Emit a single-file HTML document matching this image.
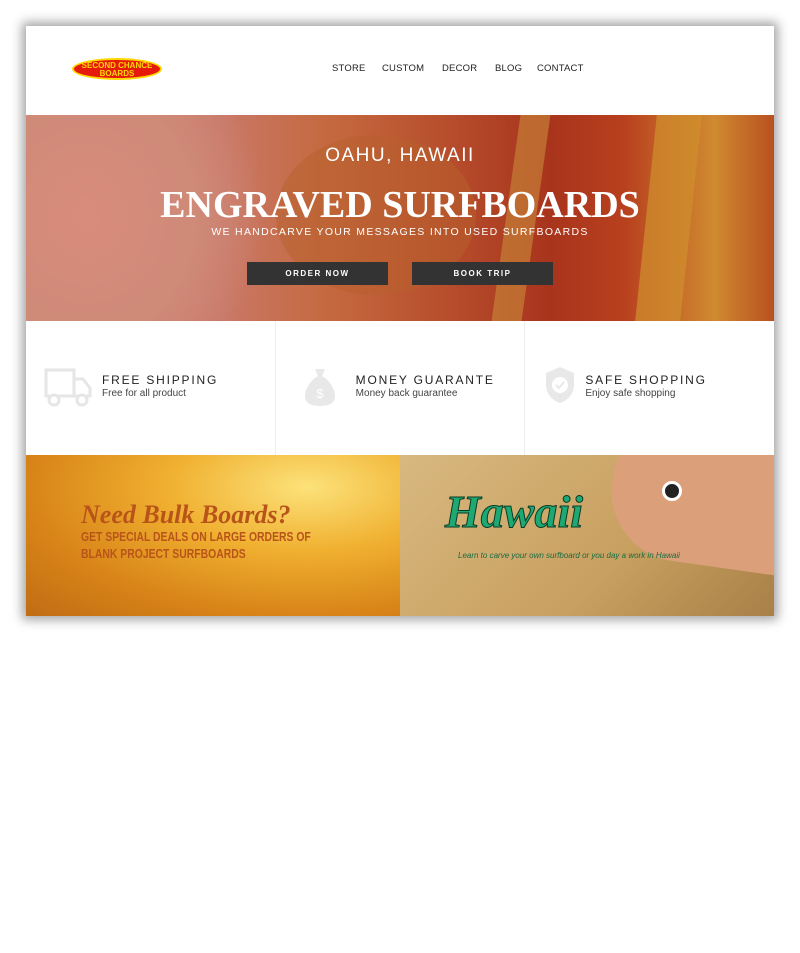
<!DOCTYPE html>
<html><head><meta charset="utf-8"><style>
*{margin:0;padding:0;box-sizing:border-box}
body{width:800px;height:953px;background:#fff;font-family:"Liberation Sans",sans-serif;position:relative;overflow:hidden}
.card{position:absolute;left:26px;top:26px;width:748px;height:590px;background:#fff;box-shadow:0 0 10px 4px rgba(0,0,0,.35)}
.hdr{height:89px;position:relative}
.logo{position:absolute;left:46px;top:32px;width:90px;height:22px;background:#e61a0a;border:2px solid #ffd800;border-radius:50%;color:#ffd800;font-size:8px;font-weight:bold;text-align:center;line-height:8px;padding-top:2px}
.nav{position:absolute;top:37px;font-size:9.5px;color:#222;letter-spacing:.2px}
.hero{position:relative;height:206px;background:
radial-gradient(ellipse 180px 200px at 60px 100px,#d88c7c 0%,#cf8a78 60%,transparent 100%),
linear-gradient(90deg,#d4907e 0%,#c9786a 25%,#c56a40 40%,#b8502e 55%,#a8341c 70%,#b8401e 80%,#d08a30 92%,#b85020 100%);overflow:hidden}
.hero .s1{position:absolute;left:480px;top:0;width:30px;height:206px;background:#c98a3a;opacity:.6;transform:skewX(-8deg)}
.hero .s2{position:absolute;left:620px;top:0;width:45px;height:206px;background:#d0902e;opacity:.7;transform:skewX(-6deg)}
.hero .s3{position:absolute;left:250px;top:20px;width:200px;height:160px;background:#b8602c;opacity:.5;border-radius:50%}
.ht{position:absolute;width:100%;text-align:center;color:#fff}
.btn{position:absolute;top:147px;width:141px;height:23px;background:#333;color:#fff;font-size:8px;font-weight:bold;letter-spacing:1.5px;text-align:center;line-height:23px}
.feat{height:134px;display:flex}
.f{flex:1;position:relative;border-right:1px solid #eee}
.f:last-child{border:none}
.f h4{position:absolute;top:52px;font-size:12px;letter-spacing:1.8px;color:#222;font-weight:normal}
.f p{position:absolute;top:67px;font-size:10px;color:#444}
.ban{height:161px;display:flex}
</style></head><body>
<div class="card">
<div class="hdr">
<div class="logo">SECOND CHANCE<br>BOARDS</div>
<div class="nav" style="left:306px">STORE</div>
<div class="nav" style="left:356px">CUSTOM</div>
<div class="nav" style="left:416px">DECOR</div>
<div class="nav" style="left:469px">BLOG</div>
<div class="nav" style="left:511px">CONTACT</div>
</div>
<div class="hero">
<div class="s3"></div><div class="s1"></div><div class="s2"></div>
<div class="ht" style="top:30px;font-size:19px;letter-spacing:1.5px">OAHU, HAWAII</div>
<div class="ht" style="top:68px;font-family:'Liberation Serif',serif;font-weight:bold;font-size:38px;line-height:44px">ENGRAVED SURFBOARDS</div>
<div class="ht" style="top:111px;font-size:10.5px;letter-spacing:1.3px">WE HANDCARVE YOUR MESSAGES INTO USED SURFBOARDS</div>
<div class="btn" style="left:221px">ORDER NOW</div>
<div class="btn" style="left:386px">BOOK TRIP</div>
</div>
<div class="feat">
<div class="f"><svg style="position:absolute;left:18px;top:46px" width="48" height="40" viewBox="0 0 48 40" fill="none" stroke="#e6e6e6" stroke-width="3"><rect x="2" y="3" width="28" height="26"/><path d="M30 12h9l7 9v8H30z"/><circle cx="10" cy="33" r="5" fill="#fff"/><circle cx="38" cy="33" r="5" fill="#fff"/></svg><h4 style="left:76px">FREE SHIPPING</h4><p style="left:76px">Free for all product</p></div>
<div class="f"><svg style="position:absolute;left:28px;top:46px" width="32" height="40" viewBox="0 0 32 40"><path d="M11 2h10l-3 7c8 4 13 14 13 20 0 7-6 10-15 10S1 36 1 29C1 23 6 13 14 9z" fill="#e8e8e8"/><text x="16" y="31" font-size="13" fill="#fff" text-anchor="middle" font-family="Liberation Sans">$</text></svg><h4 style="left:80px">MONEY GUARANTE</h4><p style="left:80px">Money back guarantee</p></div>
<div class="f"><svg style="position:absolute;left:18px;top:44px" width="34" height="40" viewBox="0 0 34 40"><path d="M17 2l14 6v12c0 9-7 16-14 18C10 36 3 29 3 20V8z" fill="#e8e8e8"/><circle cx="17" cy="20" r="8" fill="#fff"/><path d="M13 20l3 3 5-6" stroke="#e8e8e8" stroke-width="2" fill="none"/></svg><h4 style="left:60px">SAFE SHOPPING</h4><p style="left:60px">Enjoy safe shopping</p></div>
</div>
<div class="ban">
<div style="flex:1;position:relative;background:radial-gradient(ellipse at 75% 20%,#fce27a 0%,#f0b030 35%,#d88418 70%,#c06c14 100%)">
<div style="position:absolute;left:55px;top:45px;font-family:'Liberation Serif',serif;font-style:italic;font-weight:bold;font-size:26px;color:#b8541a">Need Bulk Boards?</div>
<div style="position:absolute;left:55px;top:73px;font-size:13px;font-weight:bold;color:#b8541a;line-height:17px;transform:scaleX(.8);transform-origin:left">GET SPECIAL DEALS ON LARGE ORDERS OF<br>BLANK PROJECT SURFBOARDS</div>
</div>
<div style="flex:1;position:relative;background:linear-gradient(135deg,#d8b880,#c8a060 60%,#a88048);overflow:hidden">
<div style="position:absolute;left:210px;top:-10px;width:190px;height:120px;background:#dba07a;border-radius:40px 0 0 70px;transform:rotate(8deg)"></div>
<div style="position:absolute;left:262px;top:26px;width:20px;height:20px;border-radius:50%;background:#222;border:3px solid #fff"></div>
<div style="position:absolute;left:45px;top:30px;font-family:'Liberation Serif',serif;font-style:italic;font-weight:bold;font-size:46px;color:#1ea874;-webkit-text-stroke:1px #0a3a22">Hawaii</div>
<div style="position:absolute;left:58px;top:96px;font-style:italic;font-size:8px;color:#1a6a40">Learn to carve your own surfboard or you day a work in Hawaii</div>
</div>
</div>
</div>
</body></html>
